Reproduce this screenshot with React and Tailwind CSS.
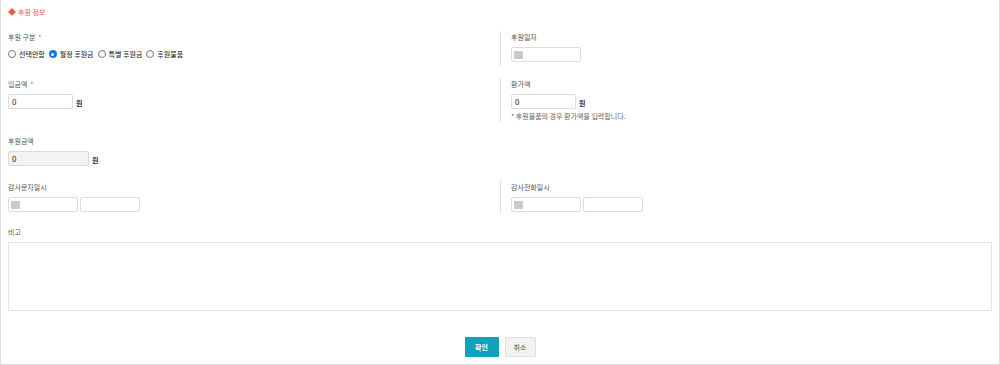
import React from "react";

const font = { fontFamily: '"Noto Sans CJK KR", "Noto Sans", sans-serif' };

function Label({ children, req }) {
  return (
    <div className="h-[12px] leading-[12px] text-[7px] text-[#555] mb-[4px]">
      {children}
      {req && <span className="text-[#f05a4a] ml-[3px]">*</span>}
    </div>
  );
}

function NumInput({ w, gray }) {
  return (
    <div className="flex items-start h-[15px]">
      <div
        className={`h-[15px] border border-[#dcdcdc] rounded-[2px] text-[8px] leading-[13px] text-[#222] pl-[3px] ${gray ? "bg-[#f3f3f3]" : "bg-white"}`}
        style={{ width: w }}
      >
        0
      </div>
      <span className="ml-[3px] text-[7px] text-[#333] font-bold leading-[15px] mt-[2px]">원</span>
    </div>
  );
}

function DateInput({ w }) {
  return (
    <div
      className="h-[15px] border border-[#dcdcdc] rounded-[2px] bg-white flex items-center pl-[2px]"
      style={{ width: w }}
    >
      <div className="w-[9px] h-[8px] bg-[#c9c9cf] rounded-[1px]" />
    </div>
  );
}

function PlainInput({ w }) {
  return <div className="h-[15px] border border-[#dcdcdc] rounded-[2px] bg-white" style={{ width: w }} />;
}

function Radio({ checked, label }) {
  return (
    <div className="flex items-center mr-[4px]">
      {checked ? (
        <div className="w-[8px] h-[8px] rounded-full bg-[#1a73e8] flex items-center justify-center">
          <div className="w-[3px] h-[3px] rounded-full bg-white" />
        </div>
      ) : (
        <div className="w-[8px] h-[8px] rounded-full border border-[#777] bg-white" />
      )}
      <span className="ml-[3px] text-[7px] text-[#333] font-medium">{label}</span>
    </div>
  );
}

export default function App() {
  return (
    <div style={font} className="w-[1000px] h-[365px] border-l border-r border-b border-[#dcdcdc] bg-white relative">
      <div className="pl-[7px] pt-[6px] h-[12px] box-content leading-[12px] text-[7px] text-[#ee5a49] flex items-center">
        <span className="text-[8px] mr-[2px] leading-[12px]">◆</span>
        <span>후원 정보</span>
      </div>
      <div className="pl-[7px] pr-[7px] pt-[13px]">
        {/* Row 1 */}
        <div className="flex">
          <div className="w-[492px] pb-[5px]">
            <Label req>후원 구분</Label>
            <div className="flex items-center h-[14px]">
              <Radio label="선택안함" />
              <Radio checked label="월정 후원금" />
              <Radio label="특별 후원금" />
              <Radio label="후원물품" />
            </div>
          </div>
          <div className="border-l border-[#dcdcdc] pl-[10px]">
            <Label>후원일자</Label>
            <DateInput w={70} />
          </div>
        </div>
        {/* Row 2 */}
        <div className="flex mt-[12px]">
          <div className="w-[492px]">
            <Label req>입금액</Label>
            <NumInput w={65} />
          </div>
          <div className="border-l border-[#dcdcdc] pl-[10px]">
            <Label>환가액</Label>
            <NumInput w={65} />
            <div className="text-[7px] text-[#666] leading-[11px] mt-[2px]">* 후원물품의 경우 환가액을 입력합니다.</div>
          </div>
        </div>
        {/* Row 3 */}
        <div className="mt-[13px]">
          <Label>후원금액</Label>
          <NumInput w={81} gray />
        </div>
        {/* Row 4 */}
        <div className="flex mt-[15px]">
          <div className="w-[492px] pb-[1px]">
            <Label>감사문자일시</Label>
            <div className="flex gap-[2px]">
              <DateInput w={70} />
              <PlainInput w={60} />
            </div>
          </div>
          <div className="border-l border-[#dcdcdc] pl-[10px]">
            <Label>감사전화일시</Label>
            <div className="flex gap-[2px]">
              <DateInput w={70} />
              <PlainInput w={60} />
            </div>
          </div>
        </div>
        {/* Row 5 */}
        <div className="mt-[13px]">
          <Label>비고</Label>
          <div className="h-[69px] border border-[#e3e3e3] bg-white w-[984px]" />
        </div>
        {/* Buttons */}
        <div className="flex justify-center gap-[6px] mt-[26px]">
          <div className="w-[34px] h-[20px] bg-[#10a2bb] text-white text-[7px] font-bold flex items-center justify-center rounded-[1px]">확인</div>
          <div className="w-[31px] h-[20px] bg-[#f2f2f2] border border-[#dedede] text-[#555] text-[7px] flex items-center justify-center rounded-[1px]">취소</div>
        </div>
      </div>
    </div>
  );
}
